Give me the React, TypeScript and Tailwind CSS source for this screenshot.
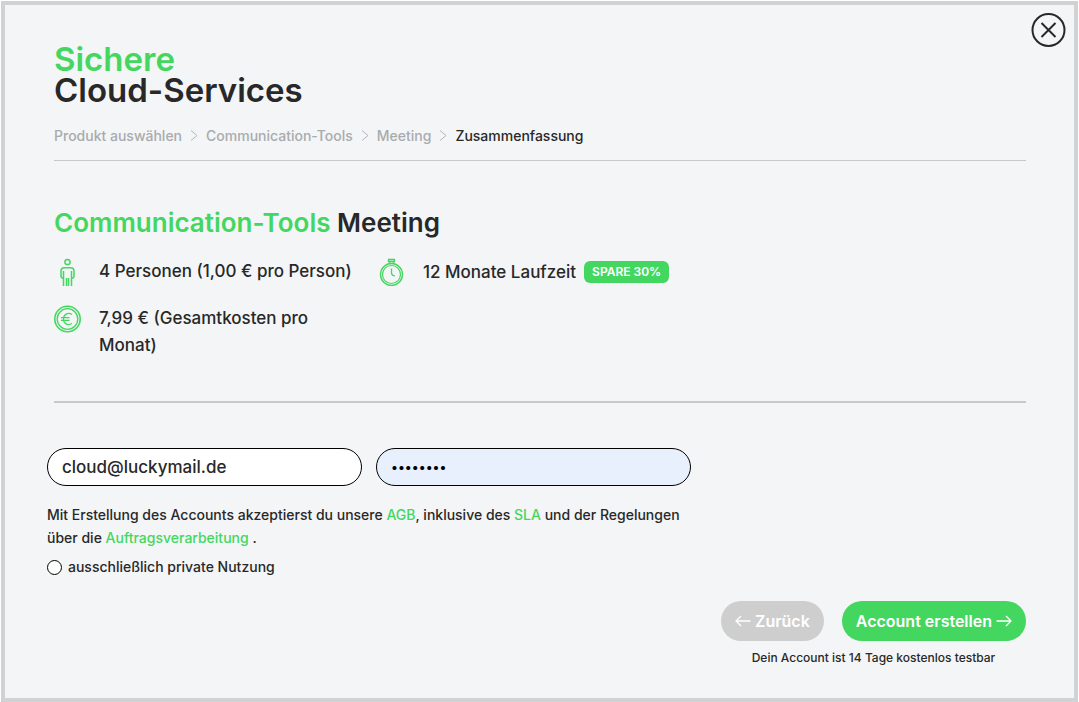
import { useState } from 'react';

const steps = ['Produkt auswählen', 'Communication-Tools', 'Meeting', 'Zusammenfassung'];

function PersonIcon() {
  return (
    <svg className="w-7 h-7 shrink-0" viewBox="0 0 28 28" fill="none" stroke="#44d75f" strokeWidth="1.5" aria-hidden="true">
      <circle cx="13.5" cy="4" r="2.6" />
      <path d="M9.5 20.3C7.800 20.300 7 19.500 7 18v-4.500c0-2.400 1-3.700 3.300-3.700h6.400c2.300 0 3.300 1.300 3.300 3.700V18c0 1.500-.8 2.300-2.500 2.300" />
      <path d="M9.500 13v15M17.500 13v15M12.500 28v-8M14.500 28v-8" />
    </svg>
  );
}

function StopwatchIcon() {
  return (
    <svg className="w-7 h-7 shrink-0" viewBox="0 0 28 28" fill="none" stroke="#44d75f" aria-hidden="true">
      <circle cx="13.5" cy="16.500" r="11" strokeWidth="1.4" />
      <circle cx="13.5" cy="16.500" r="9" strokeWidth="1.2" />
      <path d="M10.500 1.500h6v2h-6zM11.500 3.500v2M15.500 3.500v2" strokeWidth="1.3" />
      <path d="M13.500 10.500V15c0 1.700 1.200 2.500 3.200 3" strokeWidth="1.3" />
    </svg>
  );
}

function EuroIcon() {
  return (
    <svg className="w-7 h-7 shrink-0" viewBox="0 0 28 28" fill="none" stroke="#44d75f" aria-hidden="true">
      <circle cx="13.5" cy="14" r="12.700" strokeWidth="1.6" />
      <circle cx="13.5" cy="14" r="10.300" strokeWidth="1.3" />
      <path d="M18 9.500c-4.500-2.600-8.500 0-8.500 4.500s4 7.100 8.500 4.500M7 12.700h8.500M7 15.300h8.500" strokeWidth="1.3" />
    </svg>
  );
}

function Arrow({ left = false }: { left?: boolean }) {
  return (
    <svg className="w-4 h-4 shrink-0" viewBox="0 0 16 16" fill="none" stroke="currentColor" strokeWidth="1.3" aria-hidden="true">
      <path d={left ? 'M15.500 8H1M6 3L1 8l5 5' : 'M0.500 8H15M10 3l5 5-5 5'} />
    </svg>
  );
}

export default function App() {
  const [email, setEmail] = useState('cloud@luckymail.de');
  const [password, setPassword] = useState('passwort');

  return (
    <div className="min-h-screen flex bg-white pl-px pt-px pr-px font-['Inter',sans-serif] font-medium text-[#282828]">
      <main className="relative flex-1 border-4 border-[#d0d2d4] bg-[#f3f5f7] pt-[39px] pb-6">
        <button type="button" aria-label="Schließen" className="absolute top-2 right-2 w-9 h-9">
          <svg viewBox="0 0 36 36" fill="none" stroke="#282828" strokeWidth="2" aria-hidden="true">
            <circle cx="18.5" cy="17" r="16" />
            <path d="M11.500 10l14 14M25.500 10l-14 14" />
          </svg>
        </button>

        <div className="px-12 ml-px">
          <header>
            <h1 className="text-[33px] leading-[31px] font-semibold">
              <span className="block text-[#44d75f]">Sichere</span>
              Cloud-Services
            </h1>
            <nav aria-label="Schritte" className="mt-5 pb-3.5 border-b border-[#c7c9cb]">
              <ol className="flex items-center text-sm leading-5 text-[#a9abad]">
                {steps.map((step, i) => (
                  <li key={step} className="flex items-center">
                    {i > 0 && (
                      <svg className="w-2 h-3 mx-2" viewBox="0 0 8 12" fill="none" stroke="#b4b6b8" aria-hidden="true">
                        <path d="M1 0.500l6 5-6 5" />
                      </svg>
                    )}
                    {i === steps.length - 1 ? (
                      <span aria-current="step" className="text-[#282828]">{step}</span>
                    ) : (
                      <a href="#">{step}</a>
                    )}
                  </li>
                ))}
              </ol>
            </nav>
          </header>

          {/* Order summary */}
          <section className="pt-11 pb-[42px] border-b-2 border-[#c7c9cb]">
            <h2 className="text-[26px] leading-9 font-semibold">
              <span className="text-[#44d75f]">Communication-Tools</span> Meeting
            </h2>
            <ul className="mt-[17px] grid grid-cols-3 gap-y-[19px] text-[17px] leading-[27px]">
              <li className="flex gap-[17px]">
                <PersonIcon />
                <span className="whitespace-nowrap">4 Personen (1,00 € pro Person)</span>
              </li>
              <li className="flex gap-[17px] whitespace-nowrap">
                <StopwatchIcon />
                <span className="flex items-center gap-2">
                  12 Monate Laufzeit
                  <span className="h-[22px] px-2 rounded-md bg-[#44d75f] text-white text-xs leading-[22px] font-semibold">
                    SPARE 30%
                  </span>
                </span>
              </li>
              <li className="flex gap-[17px] col-start-1 pr-8">
                <EuroIcon />
                <span>7,99 € (Gesamtkosten pro Monat)</span>
              </li>
            </ul>
          </section>
        </div>

        <form className="pl-[42px] pr-12 pt-[45px]" onSubmit={(e) => e.preventDefault()}>
          <div className="w-[644px] max-w-full grid grid-cols-2 gap-3.5">
            <input
              type="email"
              aria-label="E-Mail-Adresse"
              value={email}
              onChange={(e) => setEmail(e.target.value)}
              className="min-w-0 h-[38px] px-3.5 rounded-full border border-black bg-white text-[17px]"
            />
            <input
              type="password"
              aria-label="Passwort"
              value={password}
              onChange={(e) => setPassword(e.target.value)}
              className="min-w-0 h-[38px] px-3.5 rounded-full border border-black bg-[#e8f0fe] text-[13px] text-black"
            />
          </div>
          <p className="mt-[17px] max-w-[644px] text-sm leading-[23px]">
            Mit Erstellung des Accounts akzeptierst du unsere{' '}
            <a href="#" className="text-[#44d75f]">AGB</a>, inklusive des{' '}
            <a href="#" className="text-[#44d75f]">SLA</a> und der Regelungen über die{' '}
            <a href="#" className="text-[#44d75f]">Auftragsverarbeitung</a> .
          </p>
          <label className="mt-2 flex w-fit items-center gap-1.5 text-sm leading-5">
            <input type="radio" name="usage" className="appearance-none w-[15px] h-[15px] rounded-full border border-black bg-white checked:bg-[#44d75f]" />
            ausschließlich private Nutzung
          </label>

          <div className="mt-6 flex justify-end">
            <div className="flex flex-col items-center">
              <div className="flex gap-[18px] text-base font-semibold text-white">
                <button type="button" className="flex items-center gap-1 h-10 px-3.5 rounded-full bg-[#cecece]">
                  <Arrow left />
                  Zurück
                </button>
                <button type="submit" className="flex items-center gap-1 h-10 px-3.5 rounded-full bg-[#44d75f]">
                  Account erstellen
                  <Arrow />
                </button>
              </div>
              <p className="mt-2 text-xs leading-[18px]">Dein Account ist 14 Tage kostenlos testbar</p>
            </div>
          </div>
        </form>
      </main>
    </div>
  );
}
